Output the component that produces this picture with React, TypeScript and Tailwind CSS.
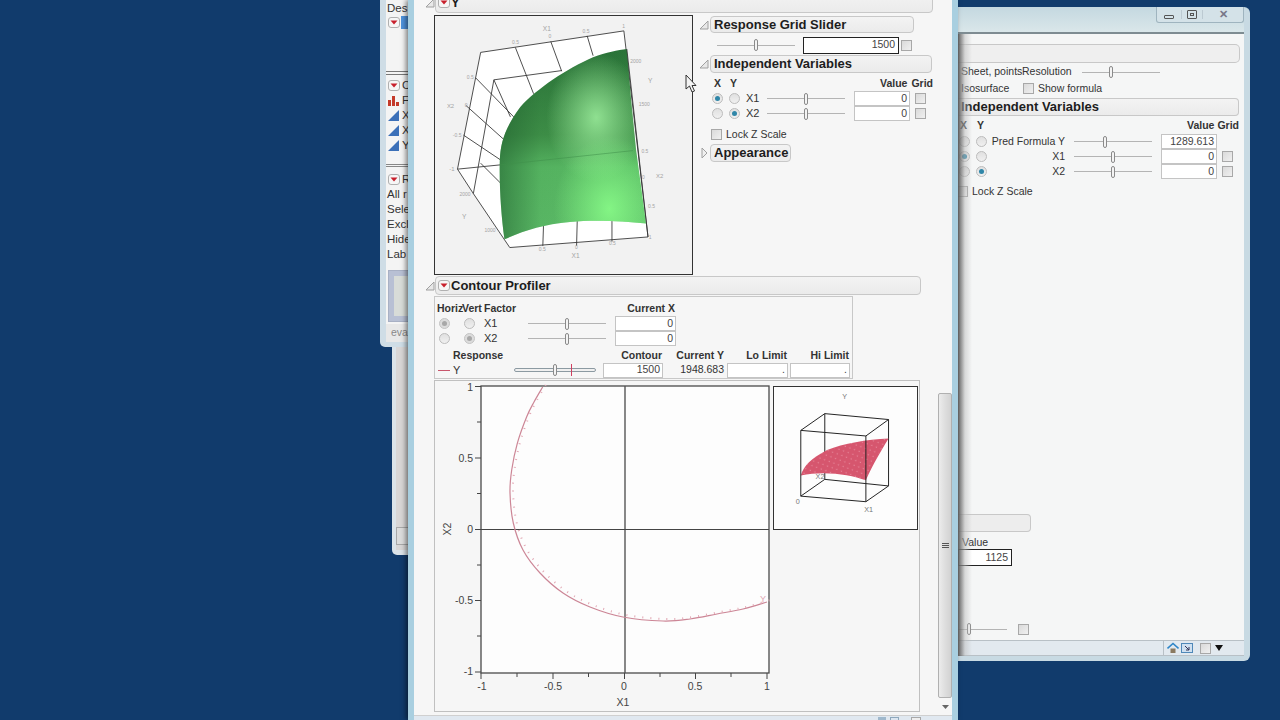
import React from "react";

const Tri = ({ open = true }: { open?: boolean }) =>
  open ? (
    <svg width="9" height="10" viewBox="0 0 9 10" className="shrink-0">
      <polygon points="8,1 8,9 0,9" fill="#e8e8e8" stroke="#a0a0a0" />
    </svg>
  ) : (
    <svg width="9" height="12" viewBox="0 0 9 12" className="shrink-0">
      <polygon points="2,1 7,6 2,11" fill="#f0f0f0" stroke="#a0a0a0" />
    </svg>
  );

const Menu = () => (
  <svg width="12" height="11" viewBox="0 0 12 11" className="shrink-0">
    <rect x="0.5" y="0.5" width="11" height="10" rx="2.5" fill="#f6f6f6" stroke="#b0b0b0" />
    <polygon points="2.5,3.5 9.5,3.5 6,7.5" fill="#c8202c" />
  </svg>
);

const HeadBox = ({ children, className = "" }: { children?: React.ReactNode; className?: string }) => (
  <div className={`flex items-center rounded-[4px] border border-[#c8c8c8] bg-gradient-to-b from-[#f3f3f3] to-[#ebebeb] text-[13px] font-bold text-[#1d1d1d] ${className}`}>
    {children}
  </div>
);

const Slider = ({ w = 78, pos = 39 }: { w?: number; pos?: number }) => (
  <div className="relative flex h-[12px] shrink-0 items-center" style={{ width: w }}>
    <div className="h-px w-full bg-[#b4b4b4]" />
    <div className="absolute top-0 h-[12px] w-[4px] rounded-full border border-[#8a8a8a] bg-[#f4f4f4]" style={{ left: pos - 2 }} />
  </div>
);

const Radio = ({ on = false, dim = false }: { on?: boolean; dim?: boolean }) => (
  <div className={`flex h-[11px] w-[11px] shrink-0 items-center justify-center rounded-full border ${dim ? "border-[#c4c4c4] bg-[#dcdcdc]" : "border-[#bcbcbc] bg-gradient-to-b from-[#e0e0e0] to-[#f0f0f0]"}`}>
    {on && <div className={`h-[5px] w-[5px] rounded-full ${dim ? "bg-[#a8a8a8]" : "bg-[#2f86a8]"}`} />}
  </div>
);

const Check = ({ className = "" }: { className?: string }) => (
  <div className={`h-[11px] w-[11px] shrink-0 border border-[#a8a8a8] bg-gradient-to-br from-[#dadada] to-[#f0f0f0] ${className}`} />
);

const Num = ({ v, w = 56, className = "" }: { v: string; w?: number; className?: string }) => (
  <div className={`flex h-[15px] shrink-0 items-center justify-end border border-[#c4c4c4] bg-white pr-[2px] text-[10.5px] text-[#444] ${className}`} style={{ width: w }}>
    {v}
  </div>
);

const SURF = "M358,480 C360,430 372,385 420,320 C470,265 560,205 640,170 C680,155 715,148 742,145 L755,300 L770,450 L800,672 C730,665 640,660 570,668 C490,675 430,695 372,720 C362,650 356,560 358,480 Z";

const Surface = () => (
  <svg viewBox="0 0 777 780" className="h-full w-full">
    <defs>
      <linearGradient id="g1" x1="0" y1="0" x2="0" y2="1">
        <stop offset="0" stopColor="#2a7338" />
        <stop offset="0.45" stopColor="#409249" />
        <stop offset="0.62" stopColor="#5abb65" />
        <stop offset="1" stopColor="#5fc06a" />
      </linearGradient>
      <linearGradient id="g2" x1="0" y1="0" x2="1" y2="0">
        <stop offset="0" stopColor="#1d5a2c" stopOpacity="0.55" />
        <stop offset="0.28" stopColor="#1d5a2c" stopOpacity="0.1" />
        <stop offset="1" stopColor="#1d5a2c" stopOpacity="0" />
      </linearGradient>
      <radialGradient id="g3" cx="0.66" cy="0.36" r="0.34">
        <stop offset="0" stopColor="#9eef9e" stopOpacity="0.85" />
        <stop offset="1" stopColor="#9eef9e" stopOpacity="0" />
      </radialGradient>
      <radialGradient id="g4" cx="0.75" cy="0.84" r="0.38">
        <stop offset="0" stopColor="#88fb88" stopOpacity="0.9" />
        <stop offset="1" stopColor="#88fb88" stopOpacity="0" />
      </radialGradient>
    </defs>
    <rect width="777" height="780" fill="#f2f2f2" />
    <g transform="translate(-162 -45)">
      <polygon points="300,155 733,90 806,713 388,745 230,508" fill="#ffffff" />
      <g fill="none" stroke="#333" strokeWidth="2.6">
        <polyline points="300,155 733,90 806,713 388,745 278,582 230,508 300,155" />
        <line x1="405" y1="140" x2="460" y2="280" />
        <line x1="512" y1="122" x2="545" y2="212" />
        <line x1="622" y1="105" x2="640" y2="165" />
        <line x1="340" y1="238" x2="545" y2="210" />
        <line x1="340" y1="238" x2="278" y2="582" />
        <line x1="340" y1="238" x2="390" y2="350" />
        <line x1="285" y1="232" x2="400" y2="350" />
        <line x1="255" y1="315" x2="372" y2="420" />
        <line x1="248" y1="405" x2="360" y2="480" />
        <line x1="230" y1="508" x2="360" y2="495" />
        <line x1="300" y1="490" x2="360" y2="550" />
        <line x1="490" y1="680" x2="488" y2="740" />
        <line x1="592" y1="665" x2="590" y2="740" />
        <line x1="697" y1="665" x2="697" y2="727" />
      </g>
      <path d={SURF} fill="url(#g1)" />
      <path d={SURF} fill="url(#g2)" />
      <path d={SURF} fill="url(#g3)" />
      <path d={SURF} fill="url(#g4)" />
      <line x1="358" y1="495" x2="760" y2="452" stroke="#3f8f4b" strokeWidth="1.6" />
      <line x1="742" y1="145" x2="806" y2="713" stroke="#333" strokeWidth="2.6" />
      <g fill="#a4a4a4" fontFamily="'Liberation Sans', sans-serif" fontSize="15">
        <text x="488" y="90" fontSize="20">X1</text>
        <text x="395" y="130">0.5</text>
        <text x="505" y="112">0</text>
        <text x="608" y="97">0.5</text>
        <text x="728" y="80">1</text>
        <text x="752" y="186">2000</text>
        <text x="806" y="248" fontSize="20">Y</text>
        <text x="778" y="318">1500</text>
        <text x="258" y="237">0.5</text>
        <text x="252" y="320">0</text>
        <text x="216" y="412">-0.5</text>
        <text x="205" y="514" fontSize="18">-1</text>
        <text x="236" y="590">2000</text>
        <text x="244" y="660" fontSize="20">Y</text>
        <text x="312" y="698">1000</text>
        <text x="476" y="754">0.5</text>
        <text x="585" y="750">0</text>
        <text x="688" y="738">0.5</text>
        <text x="808" y="720">1</text>
        <text x="575" y="776" fontSize="20">X1</text>
        <text x="786" y="458">0.5</text>
        <text x="788" y="538">0</text>
        <text x="806" y="626">0.5</text>
        <text x="830" y="535" fontSize="18">X2</text>
        <text x="198" y="322" fontSize="18">X2</text>
      </g>
    </g>
  </svg>
);

const curvePts: [number, number][] = [
  [542.7, 387], [534, 402], [526.7, 416.7], [517.3, 443.3], [511.7, 470], [510, 493], [513.3, 523], [523, 550], [540, 573], [563, 593], [590, 607], [623, 617], [663, 621], [690, 619], [717, 614], [743, 609], [767, 602],
];

const smooth = (p: [number, number][]) => {
  let d = `M${p[0][0]},${p[0][1]}`;
  for (let i = 0; i < p.length - 1; i++) {
    const a = p[Math.max(i - 1, 0)];
    const b = p[i];
    const c = p[i + 1];
    const e = p[Math.min(i + 2, p.length - 1)];
    d += ` C${b[0] + (c[0] - a[0]) / 6},${b[1] + (c[1] - a[1]) / 6} ${c[0] - (e[0] - b[0]) / 6},${c[1] - (e[1] - b[1]) / 6} ${c[0]},${c[1]}`;
  }
  return d;
};
const curve = smooth(curvePts);

const ContourPlot = () => {
  const xs = [481, 517, 553, 588.5, 624.5, 660, 695.5, 731, 767];
  const ys = [386.5, 422, 458, 493.5, 529.5, 565, 600.5, 636, 672];
  return (
    <svg viewBox="435 381 338 330" className="h-[330px] w-[338px] shrink-0">
      <rect x="481" y="386" width="288" height="287" fill="#fdfdfd" stroke="#4a4a4a" strokeWidth="1.3" />
      <line x1="625" y1="386" x2="625" y2="673" stroke="#555" strokeWidth="1.4" />
      <line x1="481" y1="529.5" x2="769" y2="529.5" stroke="#444" strokeWidth="1" />
      <path d={curve} fill="none" stroke="#cc8696" strokeWidth="1.2" />
      <path d={curve} fill="none" stroke="#e2a8b4" strokeWidth="2" strokeDasharray="1 7" transform="translate(3 -2)" />
      {xs.map((x, i) => (
        <line key={i} x1={x} y1="673" x2={x} y2={i % 2 ? 677 : 679} stroke="#444" />
      ))}
      {ys.map((y, i) => (
        <line key={i} x1="481" y1={y} x2={i % 2 ? 477 : 475} y2={y} stroke="#444" />
      ))}
      <g fontFamily="'Liberation Sans', sans-serif" fontSize="10.5" fill="#444">
        <text x="473" y="390.5" textAnchor="end">1</text>
        <text x="473" y="462" textAnchor="end">0.5</text>
        <text x="473" y="533" textAnchor="end">0</text>
        <text x="473" y="604" textAnchor="end">-0.5</text>
        <text x="473" y="675" textAnchor="end">-1</text>
        <text x="482" y="690" textAnchor="middle">-1</text>
        <text x="553" y="690" textAnchor="middle">-0.5</text>
        <text x="624" y="690" textAnchor="middle">0</text>
        <text x="695" y="690" textAnchor="middle">0.5</text>
        <text x="767" y="690" textAnchor="middle">1</text>
        <text x="623" y="706" textAnchor="middle">X1</text>
        <text transform="translate(451 529) rotate(-90)" textAnchor="middle">X2</text>
        <text x="760" y="602" fontSize="9" fill="#e2a8b4">Y</text>
      </g>
    </svg>
  );
};

const MiniPlot = () => (
  <div className="mt-[5px] h-[144px] w-[145px] shrink-0 border border-[#333] bg-[#fdfdfd]">
    <svg viewBox="40 16 432 432" className="h-full w-full">
      <defs>
        <pattern id="dots" width="15" height="15" patternUnits="userSpaceOnUse" patternTransform="rotate(20)">
          <circle cx="7" cy="7" r="2" fill="#ea92a4" />
        </pattern>
      </defs>
      <g fill="none" stroke="#222" strokeWidth="3">
        <polygon points="193,97 387,115 387,317 193,297" />
        <line x1="120" y1="148" x2="193" y2="97" />
        <line x1="318" y1="165" x2="387" y2="115" />
        <line x1="120" y1="348" x2="193" y2="297" />
        <line x1="318" y1="365" x2="387" y2="317" />
      </g>
      <path d="M120,285 C130,255 150,235 200,208 C250,188 320,176 387,173 C365,210 340,250 318,300 C270,282 190,270 120,285 Z" fill="#d6566e" />
      <path d="M120,285 C130,255 150,235 200,208 C250,188 320,176 387,173 C365,210 340,250 318,300 C270,282 190,270 120,285 Z" fill="url(#dots)" />
      <polygon points="120,148 318,165 318,365 120,348" fill="none" stroke="#222" strokeWidth="3" />
      <g fontFamily="'Liberation Sans', sans-serif" fontSize="22" fill="#777">
        <text x="246" y="54">Y</text>
        <text x="105" y="371">0</text>
        <text x="313" y="395">X1</text>
        <text x="165" y="296">X2</text>
      </g>
    </svg>
  </div>
);

const Cursor = () => (
  <svg width="12" height="19" viewBox="0 0 12 19" className="absolute left-[685px] top-[74px]">
    <path d="M1,1 L1,15 L4.5,12 L7,18 L9.5,17 L7,11.5 L11,11.5 Z" fill="#f4f4f4" stroke="#333" strokeWidth="1" />
  </svg>
);

const BlueTri = () => (
  <svg width="11" height="11" viewBox="0 0 11 11" className="shrink-0">
    <polygon points="0,11 11,0 11,11" fill="#3c70b8" />
  </svg>
);

const BackWindow = () => (
  <div className="absolute left-[380px] top-0 flex h-[347px] w-[30px] overflow-hidden rounded-bl-[5px] bg-[#cfdde6] pb-[5px] pl-[6px]">
    <div className="flex w-full flex-col overflow-hidden whitespace-nowrap bg-[#f4f4f4] text-[11.5px] text-[#333]">
      <div className="mt-[2px] h-[12px] pl-px leading-[12px]">Des</div>
      <div className="mt-[2px] flex h-[13px] items-center pl-[2px]">
        <Menu />
        <div className="ml-px h-[13px] w-full bg-[#4f93dc]" />
      </div>
      <div className="mt-[42px] h-[4px] border-y border-[#777]" />
      <div className="mt-[3px] flex h-[15px] items-center pl-[2px]"><Menu /><span className="ml-[2px]">C</span></div>
      <div className="flex h-[15px] items-center pl-[2px]">
        <svg width="11" height="11" viewBox="0 0 11 11" className="shrink-0"><path d="M0,11V5H3V11ZM4,11V1H7V11ZM8,11V7H11V11Z" fill="#c43a2a" /></svg>
        <span className="ml-[3px]">F</span>
      </div>
      <div className="flex h-[15px] items-center pl-[2px]"><BlueTri /><span className="ml-[3px]">X</span></div>
      <div className="flex h-[15px] items-center pl-[2px]"><BlueTri /><span className="ml-[3px]">X</span></div>
      <div className="flex h-[15px] items-center pl-[2px]"><BlueTri /><span className="ml-[3px]">Y</span></div>
      <div className="mt-[11px] h-[3px] border-y border-[#888]" />
      <div className="mt-[5px] flex h-[15px] items-center pl-[2px]"><Menu /><span className="ml-[2px]">R</span></div>
      <div className="h-[15px] pl-px leading-[15px]">All r</div>
      <div className="h-[15px] pl-px leading-[15px]">Sele</div>
      <div className="h-[15px] pl-px leading-[15px]">Excl</div>
      <div className="h-[15px] pl-px leading-[15px]">Hide</div>
      <div className="h-[14px] pl-px leading-[14px]">Lab</div>
      <div className="ml-[2px] mt-[9px] flex h-[53px] items-center border border-[#a8b0c4] bg-[#b8c0d4] pl-[5px]">
        <div className="h-[40px] w-full bg-[#d8dcd8]" />
      </div>
      <div className="mt-[2px] flex h-[18px] items-center bg-[#e8e8e8] pl-[5px] text-[10.5px] text-[#888]">eva</div>
    </div>
  </div>
);

const BackWindow2 = () => (
  <div className="absolute left-[392px] top-[347px] flex h-[208px] w-[18px] rounded-bl-[5px] bg-[#dbe3e9] pb-[5px] pl-[4px]">
    <div className="flex h-full w-full flex-col justify-end bg-[#d8d6d6] pb-[5px]">
      <div className="h-[18px] border border-r-0 border-[#a8a8a8] bg-[#dcdcdc]" />
    </div>
  </div>
);

const MainWindow = () => (
  <div className="absolute left-[408px] top-0 flex h-[720px] w-[550px] flex-col overflow-hidden border-x-[6px] border-l-[#a9cfe0] border-r-[#a9cfe0] bg-[#f6f6f6] shadow-[-2px_0_5px_rgba(0,0,0,0.5)]">
    <div className="flex h-[715px] shrink-0">
      <div className="w-[524px] shrink-0 text-[#333]">
        <div className="-mt-[8px] ml-[12px] flex items-center">
          <Tri />
          <HeadBox className="h-[21px] w-[498px] pl-[2px]">
            <Menu />
            <span className="ml-[1px]">Y</span>
          </HeadBox>
        </div>
        <div className="ml-[20px] mt-[2px] flex">
          <div className="h-[260px] w-[259px] shrink-0 border border-[#333]">
            <Surface />
          </div>
          <div className="ml-[7px] w-[233px] shrink-0">
            <div className="mt-px flex items-center">
              <Tri />
              <HeadBox className="ml-px h-[17px] w-[204px] pl-[3px]">Response Grid Slider</HeadBox>
            </div>
            <div className="mt-[3px] flex h-[18px] items-center pl-[17px]">
              <Slider />
              <div className="ml-[8px] flex h-[17px] w-[96px] items-center justify-end border border-[#222] bg-white pr-[3px] text-[10.5px] text-[#444]">1500</div>
              <Check className="ml-[2px]" />
            </div>
            <div className="mt-[1px] flex items-center">
              <Tri />
              <HeadBox className="ml-px h-[18px] w-[222px] pl-[3px]">Independent Variables</HeadBox>
            </div>
            <div className="mt-[5px] flex h-[12px] items-center text-[10.5px] font-bold text-[#333]">
              <span className="ml-[14px] w-[16px]">X</span>
              <span>Y</span>
              <span className="ml-[143px]">Value</span>
              <span className="ml-[4px]">Grid</span>
            </div>
            <div className="mt-px flex h-[15px] items-center pl-[12px] text-[11px]">
              <Radio on />
              <span className="ml-[6px]"><Radio /></span>
              <span className="ml-[6px] w-[21px]">X1</span>
              <Slider />
              <Num v="0" className="ml-[9px]" />
              <Check className="ml-[5px]" />
            </div>
            <div className="flex h-[15px] items-center pl-[12px] text-[11px]">
              <Radio />
              <span className="ml-[6px]"><Radio on /></span>
              <span className="ml-[6px] w-[21px]">X2</span>
              <Slider />
              <Num v="0" className="ml-[9px]" />
              <Check className="ml-[5px]" />
            </div>
            <div className="ml-[11px] mt-[8px] flex h-[11px] items-center text-[10.5px]">
              <Check />
              <span className="ml-[4px]">Lock Z Scale</span>
            </div>
            <div className="mt-[4px] flex items-center">
              <Tri open={false} />
              <HeadBox className="ml-px h-[18px] w-[81px] pl-[3px]">Appearance</HeadBox>
            </div>
          </div>
        </div>
        <div className="ml-[12px] mt-px flex items-center">
          <Tri />
          <HeadBox className="h-[19px] w-[486px] pl-[2px]">
            <Menu />
            <span className="ml-[1px]">Contour Profiler</span>
          </HeadBox>
        </div>
        <div className="ml-[20px] mt-px h-[83px] w-[419px] border border-[#c8c8c8] text-[10.5px]">
          <div className="mt-[6px] flex h-[12px] items-center font-bold">
            <span className="ml-[2px] w-[25px]">Horiz</span>
            <span className="w-[22px]">Vert</span>
            <span className="w-[40px]">Factor</span>
            <span className="ml-[103px] w-[48px] whitespace-nowrap text-right">Current X</span>
          </div>
          <div className="mt-px flex h-[15px] items-center pl-[4px] text-[11px]">
            <Radio on dim />
            <span className="ml-[14px]"><Radio /></span>
            <span className="ml-[9px] w-[44px]">X1</span>
            <Slider />
            <Num v="0" w={61} className="ml-[9px]" />
          </div>
          <div className="flex h-[15px] items-center pl-[4px] text-[11px]">
            <Radio />
            <span className="ml-[14px]"><Radio on dim /></span>
            <span className="ml-[9px] w-[44px]">X2</span>
            <Slider />
            <Num v="0" w={61} className="ml-[9px]" />
          </div>
          <div className="mt-[3px] grid grid-cols-[79px_82px_67px_62px_63px_62px] font-bold">
            <span className="h-[13px] pl-[18px] leading-[13px]">Response</span>
            <span />
            <span className="pr-px text-right leading-[13px]">Contour</span>
            <span className="pr-px text-right leading-[13px]">Current Y</span>
            <span className="pr-px text-right leading-[13px]">Lo Limit</span>
            <span className="pr-px text-right leading-[13px]">Hi Limit</span>
          </div>
          <div className="grid h-[15px] grid-cols-[79px_82px_67px_62px_63px_62px] items-center">
            <div className="flex items-center pl-[3px] text-[11px]">
              <div className="h-px w-[12px] bg-[#c8566c]" />
              <span className="ml-[3px]">Y</span>
            </div>
            <div className="relative flex h-[12px] items-center">
              <div className="h-[4px] w-full rounded-sm border border-[#8c9aa2] bg-[#f0f0f0]" />
              <div className="absolute left-[39px] top-0 h-[12px] w-[4px] rounded-full border border-[#8a8a8a] bg-[#f4f4f4]" />
              <div className="absolute left-[57px] top-0 h-[12px] w-px bg-[#d04060]" />
            </div>
            <Num v="1500" w={60} className="ml-auto" />
            <span className="pr-px text-right">1948.683</span>
            <Num v="." w={61} className="ml-auto" />
            <Num v="." w={60} className="ml-auto" />
          </div>
        </div>
        <div className="ml-[20px] mt-px flex h-[332px] w-[486px] border border-[#c0c0c0]">
          <ContourPlot />
          <MiniPlot />
        </div>
      </div>
      <div className="flex w-[14px] shrink-0 flex-col">
        <div className="h-[393px] shrink-0" />
        <div className="flex h-[305px] shrink-0 items-center justify-center rounded-[2px] border border-[#b0b0b0] bg-gradient-to-r from-[#ececec] via-[#dedede] to-[#d2d2d2]">
          <svg width="7" height="6" viewBox="0 0 7 6"><path d="M0,0.5H7M0,2.5H7M0,4.5H7" stroke="#555" /></svg>
        </div>
        <div className="flex flex-1 items-center justify-center">
          <svg width="7" height="4" viewBox="0 0 7 4"><polygon points="0,0 7,0 3.5,4" fill="#666" /></svg>
        </div>
      </div>
    </div>
    <div className="flex h-[5px] items-start justify-end gap-[4px] border-t border-[#d0d0d0] bg-[#e0e8f0] pr-[31px] pt-px">
      <div className="h-[8px] w-[8px] bg-[#9fb8cc]" />
      <div className="h-[8px] w-[9px] border border-[#8fa8bc] bg-[#dce6f0]" />
      <div className="ml-[8px] h-[8px] w-[10px] border border-[#a8a8a8] bg-[#eeeeee]" />
    </div>
  </div>
);

const RightWindow = () => (
  <div className="absolute left-[958px] top-[7px] flex h-[654px] w-[292px] flex-col overflow-hidden rounded-r-[6px] bg-[#c8dae3] pb-[5px] pr-[6px]">
    <div className="flex h-[25px] shrink-0 justify-end bg-gradient-to-b from-[#c4d8e0] to-[#dae7ea]">
      <div className="flex h-[16px] w-[88px] items-center rounded-b-[3px] border border-t-0 border-[#9fb4bf] bg-[#d4e2e8] text-[#555]">
        <div className="flex w-[24px] justify-center pt-[4px]"><div className="h-[4px] w-[10px] rounded-[1px] border border-[#555]" /></div>
        <div className="flex w-[22px] justify-center border-x border-[#bccad2]"><div className="flex h-[9px] w-[10px] items-center justify-center rounded-[1px] border border-[#555]"><div className="h-[3px] w-[4px] border border-[#555]" /></div></div>
        <div className="flex-1 text-center text-[11px] font-bold leading-none text-[#778]">✕</div>
      </div>
    </div>
    <div className="relative flex flex-1 flex-col border-t-2 border-[#7e8c92] bg-[#f5f6f6] text-[#333]">
      <div className="flex-1">
        <div className="mt-[10px] h-[19px] w-[282px] rounded-r-[5px] border border-l-0 border-[#c8c8c8] bg-[#efefef]" />
        <div className="mt-[3px] flex h-[12px] items-center whitespace-nowrap pl-[3px] text-[10.5px]">
          <span className="w-[61px]">Sheet, points</span>
          <span className="w-[60px]">Resolution</span>
          <Slider pos={29} />
        </div>
        <div className="mt-[5px] flex h-[11px] items-center pl-[3px] text-[10.5px]">
          <span className="w-[62px]">Isosurface</span>
          <Check />
          <span className="ml-[4px]">Show formula</span>
        </div>
        <HeadBox className="mt-[4px] h-[18px] w-[281px] rounded-l-none border-l-0 pl-[3px]">Independent Variables</HeadBox>
        <div className="mt-[4px] flex h-[12px] items-center text-[10.5px] font-bold">
          <span className="ml-[2px] w-[17px]">X</span>
          <span>Y</span>
          <span className="ml-[203px]">Value</span>
          <span className="ml-[3px]">Grid</span>
        </div>
        <div className="mt-[2px] flex h-[15px] items-center pl-px text-[10.5px]">
          <Radio />
          <span className="ml-[6px]"><Radio /></span>
          <span className="w-[78px] whitespace-nowrap text-right">Pred Formula Y</span>
          <span className="ml-[9px]"><Slider pos={31} /></span>
          <Num v="1289.613" className="ml-[9px]" />
        </div>
        <div className="flex h-[15px] items-center pl-px text-[10.5px]">
          <Radio on />
          <span className="ml-[6px]"><Radio /></span>
          <span className="w-[78px] text-right">X1</span>
          <span className="ml-[9px]"><Slider pos={39} /></span>
          <Num v="0" className="ml-[9px]" />
          <Check className="ml-[5px]" />
        </div>
        <div className="flex h-[15px] items-center pl-px text-[10.5px]">
          <Radio />
          <span className="ml-[6px]"><Radio on /></span>
          <span className="w-[78px] text-right">X2</span>
          <span className="ml-[9px]"><Slider pos={39} /></span>
          <Num v="0" className="ml-[9px]" />
          <Check className="ml-[5px]" />
        </div>
        <div className="-ml-px mt-[7px] flex h-[11px] items-center text-[10.5px]">
          <Check />
          <span className="ml-[4px]">Lock Z Scale</span>
        </div>
        <div className="mt-[317px] h-[18px] w-[73px] rounded-r-[4px] border border-l-0 border-[#c8c8c8] bg-[#ededed]" />
        <div className="mt-[4px] h-[12px] pl-[4px] text-[10.5px] leading-[12px]">Value</div>
        <div className="mt-px flex h-[17px] w-[54px] items-center justify-end border border-[#222] bg-white pr-[3px] text-[10.5px] text-[#444]">1125</div>
        <div className="mt-[57px] flex items-center">
          <Slider w={49} pos={11} />
          <Check className="ml-[11px]" />
        </div>
      </div>
      <div className="flex h-[16px] shrink-0 items-center justify-start border-y border-[#b8c0c6] bg-[#e2e9ef] pl-[205px]">
        <div className="h-full w-px bg-[#b8c0c6]" />
        <svg width="12" height="12" viewBox="0 0 12 12" className="ml-[3px]">
          <path d="M0.5,6.5 L6,1.5 L11.5,6.5" fill="none" stroke="#2f86c8" strokeWidth="1.6" />
          <rect x="3.5" y="6.5" width="5" height="4.5" fill="#8a7a60" />
        </svg>
        <svg width="12" height="12" viewBox="0 0 12 12" className="ml-[2px]">
          <rect x="0.5" y="1.5" width="11" height="9" fill="#cfe0f0" stroke="#4f88b8" />
          <path d="M4,4 L8,8 M8,5 V8 H5" fill="none" stroke="#335" />
        </svg>
        <Check className="ml-[7px]" />
        <svg width="8" height="6" viewBox="0 0 8 6" className="ml-[4px]"><polygon points="0,0 8,0 4,6" fill="#111" /></svg>
      </div>
      <div className="absolute left-0 top-0 h-full w-[14px] bg-gradient-to-r from-[#666666] via-[#bbbbbb]/50 to-transparent" />
    </div>
  </div>
);

export default function App() {
  return (
    <div className="relative h-[720px] w-[1280px] overflow-hidden bg-[#113b6c] font-['Liberation_Sans',Arial,sans-serif]">
      <BackWindow />
      <BackWindow2 />
      <RightWindow />
      <MainWindow />
      <Cursor />
    </div>
  );
}
